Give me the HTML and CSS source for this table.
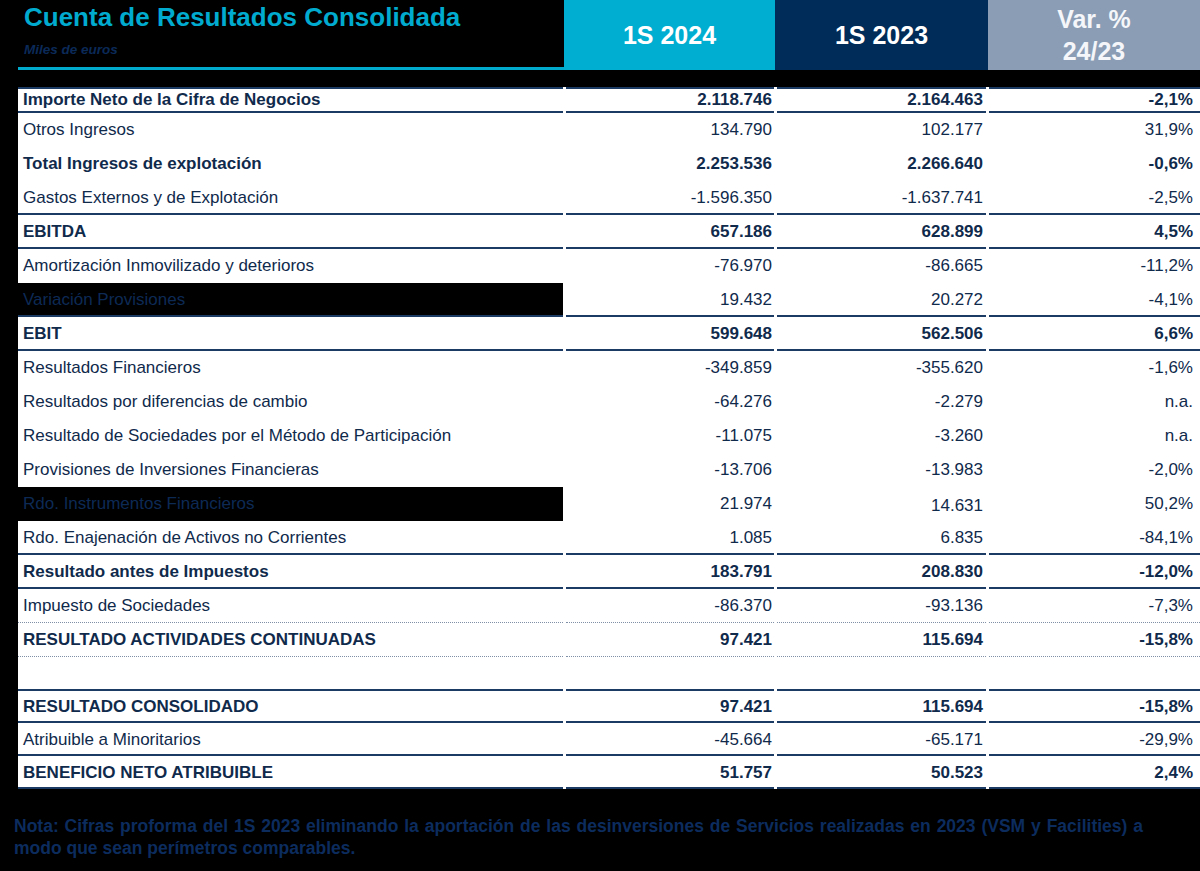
FILE: index.html
```html
<!DOCTYPE html>
<html lang="es">
<head>
<meta charset="utf-8">
<title>Cuenta de Resultados Consolidada</title>
<link rel="stylesheet" href="styles.css">
</head>
<body>
<div class="page">
  <header class="head">
    <div class="title-box">
      <h1 class="title">Cuenta de Resultados Consolidada</h1>
      <div class="subtitle">Miles de euros</div>
    </div>
    <div class="hcell h-cyan">1S 2024</div>
    <div class="hcell h-navy">1S 2023</div>
    <div class="hcell h-grey">Var. %<br>24/23</div>
  </header>

  <div class="table">
    <div class="row first bold solid top"><div class="lbl">Importe Neto de la Cifra de Negocios</div><div class="num">2.118.746</div><div class="num">2.164.463</div><div class="num pct">-2,1%</div></div>
    <div class="row"><div class="lbl">Otros Ingresos</div><div class="num">134.790</div><div class="num">102.177</div><div class="num pct">31,9%</div></div>
    <div class="row bold"><div class="lbl">Total Ingresos de explotación</div><div class="num">2.253.536</div><div class="num">2.266.640</div><div class="num pct">-0,6%</div></div>
    <div class="row solid"><div class="lbl">Gastos Externos y de Explotación</div><div class="num">-1.596.350</div><div class="num">-1.637.741</div><div class="num pct">-2,5%</div></div>
    <div class="row bold solid"><div class="lbl">EBITDA</div><div class="num">657.186</div><div class="num">628.899</div><div class="num pct">4,5%</div></div>
    <div class="row"><div class="lbl">Amortización Inmovilizado y deterioros</div><div class="num">-76.970</div><div class="num">-86.665</div><div class="num pct">-11,2%</div></div>
    <div class="row solid dark"><div class="lbl">Variación Provisiones</div><div class="num">19.432</div><div class="num">20.272</div><div class="num pct">-4,1%</div></div>
    <div class="row bold solid"><div class="lbl">EBIT</div><div class="num">599.648</div><div class="num">562.506</div><div class="num pct">6,6%</div></div>
    <div class="row"><div class="lbl">Resultados Financieros</div><div class="num">-349.859</div><div class="num">-355.620</div><div class="num pct">-1,6%</div></div>
    <div class="row"><div class="lbl">Resultados por diferencias de cambio</div><div class="num">-64.276</div><div class="num">-2.279</div><div class="num pct">n.a.</div></div>
    <div class="row"><div class="lbl">Resultado de Sociedades por el Método de Participación</div><div class="num">-11.075</div><div class="num">-3.260</div><div class="num pct">n.a.</div></div>
    <div class="row"><div class="lbl">Provisiones de Inversiones Financieras</div><div class="num">-13.706</div><div class="num">-13.983</div><div class="num pct">-2,0%</div></div>
    <div class="row dark"><div class="lbl">Rdo. Instrumentos Financieros</div><div class="num">21.974</div><div class="num low">14.631</div><div class="num pct">50,2%</div></div>
    <div class="row solid"><div class="lbl">Rdo. Enajenación de Activos no Corrientes</div><div class="num">1.085</div><div class="num">6.835</div><div class="num pct">-84,1%</div></div>
    <div class="row bold solid"><div class="lbl">Resultado antes de Impuestos</div><div class="num">183.791</div><div class="num">208.830</div><div class="num pct">-12,0%</div></div>
    <div class="row dotted"><div class="lbl">Impuesto de Sociedades</div><div class="num">-86.370</div><div class="num">-93.136</div><div class="num pct">-7,3%</div></div>
    <div class="row bold dotted"><div class="lbl">RESULTADO ACTIVIDADES CONTINUADAS</div><div class="num">97.421</div><div class="num">115.694</div><div class="num pct">-15,8%</div></div>
    <div class="row solid"><div class="lbl"></div><div class="num"></div><div class="num"></div><div class="num pct"></div></div>
    <div class="row bold solid h32"><div class="lbl">RESULTADO CONSOLIDADO</div><div class="num">97.421</div><div class="num">115.694</div><div class="num pct">-15,8%</div></div>
    <div class="row solid h33"><div class="lbl">Atribuible a Minoritarios</div><div class="num">-45.664</div><div class="num">-65.171</div><div class="num pct">-29,9%</div></div>
    <div class="row bold solid h33"><div class="lbl">BENEFICIO NETO ATRIBUIBLE</div><div class="num">51.757</div><div class="num">50.523</div><div class="num pct">2,4%</div></div>
  </div>

  <p class="note">Nota: Cifras proforma del 1S 2023 eliminando la aportación de las desinversiones de Servicios realizadas en 2023 (VSM y Facilities) a modo que sean perímetros comparables.</p>
</div>
</body>
</html>
```

FILE: styles.css
```css
* { box-sizing: border-box; }

html, body {
  margin: 0;
  padding: 0;
  background: #000;
}

body {
  font-family: "Liberation Sans", Arial, sans-serif;
  color: #102a4c;
  width: 1200px;
  height: 871px;
  overflow: hidden;
}

.page {
  display: flex;
  flex-direction: column;
}

/* ---------- header ---------- */
.head {
  display: grid;
  grid-template-columns: 564px 211px 213px 212px;
  height: 70px;
}

.title-box {
  padding: 2px 0 0 6px;
  margin-left: 18px;
  border-bottom: 3px solid #00aacd;
}

.title {
  margin: 0;
  font-size: 26px;
  line-height: 30px;
  font-weight: bold;
  color: #00abcf;
  white-space: nowrap;
}

.subtitle {
  margin-top: 10px;
  font-size: 13.5px;
  line-height: 16px;
  font-style: italic;
  font-weight: bold;
  color: #0b2a58;
}

.hcell {
  display: flex;
  align-items: center;
  justify-content: center;
  text-align: center;
  color: #fff;
  font-weight: bold;
  font-size: 25px;
  line-height: 32px;
}

.h-cyan { background: #00aed1; }
.h-navy { background: #002c59; }
.h-grey { background: #8a9db5; color: #f4f6f9; }

/* ---------- table ---------- */
.table {
  margin: 17px 0 0 18px;
  width: 1182px;
  background: #fff;
}

.row {
  display: grid;
  grid-template-columns: 545px 208px 209px 211px;
  column-gap: 3px;
  height: 34px;
  font-size: 17px;
}

.row > div {
  display: flex;
  align-items: center;
  border-bottom: 2px solid transparent;
  border-top: 2px solid transparent;
  white-space: nowrap;
}

.row.first { height: 26px; }
.row.h32 { height: 32px; }
.row.h33 { height: 33px; }

.row.top > div { border-top-color: #1b3a64; }
.row.solid > div { border-bottom-color: #1b3a64; }
.row.dotted > div {
  border-bottom: 1px dotted #7f8fa6;
  border-top-width: 1px;
}

.lbl {
  padding-left: 5px;
}

.num {
  justify-content: flex-end;
  padding-right: 2px;
}

.num.pct { padding-right: 7px; }
.row > .num:nth-child(3) { padding-right: 3px; }
.row > .num.low { padding-top: 3px; }

.bold { font-weight: bold; }

.row.dark .lbl {
  background: #000;
  color: #0d2a55;
}

/* ---------- note ---------- */
.note {
  margin: 26px 0 0 14px;
  width: 1129px;
  font-size: 17.5px;
  line-height: 22px;
  font-weight: bold;
  color: #0c2c5e;
  text-align: justify;
}
```
